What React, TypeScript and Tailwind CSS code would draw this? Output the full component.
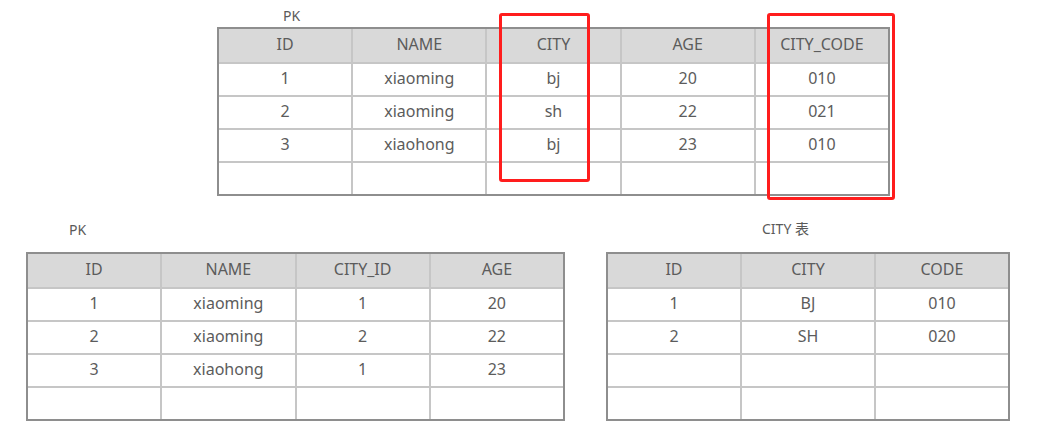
import React from "react";

type TableProps = {
  headers: string[];
  rows: string[][];
  width: string;
  cols: string;
};

function Table({ headers, rows, width, cols }: TableProps) {
  return (
    <div className={`${width} border-2 border-[#8e8e8e] bg-[#c6c6c6]`}>
      <div className={`grid ${cols} gap-[2px]`}>
        {headers.map((h, i) => (
          <div
            key={"h" + i}
            className="h-[33px] pb-[3px] bg-[#d9d9d9] flex items-center justify-center text-[16px] text-[#5c5c5c]"
          >
            {h}
          </div>
        ))}
        {rows.map((r, ri) =>
          r.map((c, ci) => (
            <div
              key={ri + "-" + ci}
              className="h-[31px] pb-[3px] bg-white flex items-center justify-center text-[16px] text-[#5c5c5c]"
            >
              {c}
            </div>
          ))
        )}
      </div>
    </div>
  );
}

export default function App() {
  return (
    <div
      className="relative w-[1037px] h-[441px] bg-white overflow-hidden"
      style={{ fontFamily: '"Noto Sans", "Noto Sans CJK SC", sans-serif' }}
    >
      <div className="pl-[217px] pt-[6px]">
        <div className="h-[21px] pl-[66px] text-[14px] leading-[20px] text-[#5a5a5a]">PK</div>
        <Table
          width="w-[673px]"
          cols="grid-cols-5"
          headers={["ID", "NAME", "CITY", "AGE", "CITY_CODE"]}
          rows={[
            ["1", "xiaoming", "bj", "20", "010"],
            ["2", "xiaoming", "sh", "22", "021"],
            ["3", "xiaohong", "bj", "23", "010"],
            ["", "", "", "", ""],
          ]}
        />
      </div>

      <div className="flex pl-[26px] pt-[23px] gap-[41px]">
        <div>
          <div className="h-[33px] pl-[43px] pt-[1px] text-[14px] leading-[20px] text-[#5a5a5a]">PK</div>
          <Table
            width="w-[539px]"
            cols="grid-cols-4"
            headers={["ID", "NAME", "CITY_ID", "AGE"]}
            rows={[
              ["1", "xiaoming", "1", "20"],
              ["2", "xiaoming", "2", "22"],
              ["3", "xiaohong", "1", "23"],
              ["", "", "", ""],
            ]}
          />
        </div>
        <div>
          <div className="h-[33px] pl-[156px] text-[14px] leading-[20px] text-[#5a5a5a]">CITY 表</div>
          <Table
            width="w-[404px]"
            cols="grid-cols-3"
            headers={["ID", "CITY", "CODE"]}
            rows={[
              ["1", "BJ", "010"],
              ["2", "SH", "020"],
              ["", "", ""],
              ["", "", ""],
            ]}
          />
        </div>
      </div>

      <div className="absolute left-[499px] top-[13px] w-[91px] h-[169px] border-[3px] border-[#ff1d1d] rounded-[3px]" />
      <div className="absolute left-[767px] top-[13px] w-[128px] h-[187px] border-[3px] border-[#ff1d1d] rounded-[3px]" />
    </div>
  );
}
